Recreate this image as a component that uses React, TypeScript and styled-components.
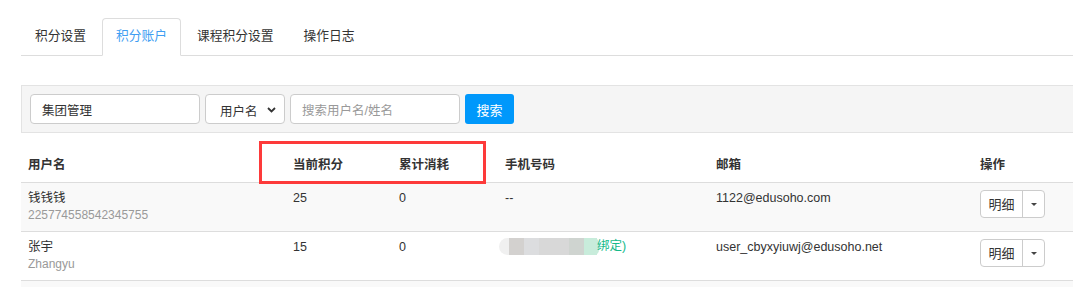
import React from "react";
import styled, { createGlobalStyle } from "styled-components";

const GlobalStyle = createGlobalStyle`
  html, body { margin: 0; padding: 0; background: #fff; overflow: hidden; }
  body {
    font-family: "Liberation Sans", "Noto Sans CJK SC", Arial, sans-serif;
    color: #333;
  }
  * { box-sizing: border-box; }
`;

const Page = styled.div`
  padding: 18px 0 0 21px;
  width: 1090px;
`;

const Tabs = styled.ul`
  display: flex;
  list-style: none;
  margin: 0;
  padding: 0;
  border-bottom: 1px solid #ddd;
`;

const Tab = styled.li<{ $active?: boolean }>`
  margin-right: 2px;
  margin-bottom: -1px;
  padding: 8px 13px 10px;
  font-size: 12.75px;
  line-height: 18px;
  border: 1px solid ${(p) => (p.$active ? "#ddd" : "transparent")};
  border-bottom-color: ${(p) => (p.$active ? "#fff" : "transparent")};
  border-radius: 4px 4px 0 0;
  background: ${(p) => (p.$active ? "#fff" : "transparent")};
  color: ${(p) => (p.$active ? "#3f9ef2" : "#333")};
  white-space: nowrap;
`;

const FilterPanel = styled.div`
  margin-top: 29px;
  display: flex;
  align-items: center;
  gap: 5px;
  padding: 8px;
  background: #f5f5f5;
  border: 1px solid #e3e3e3;
`;

const TextBox = styled.div<{ $placeholder?: boolean }>`
  width: 170px;
  height: 30px;
  display: flex;
  align-items: center;
  padding: 0 11px;
  background: #fff;
  border: 1px solid #ccc;
  border-radius: 4px;
  font-size: 12.5px;
  color: ${(p) => (p.$placeholder ? "#999" : "#333")};
`;

const SelectBox = styled.div`
  width: 80px;
  height: 30px;
  display: flex;
  align-items: center;
  justify-content: space-between;
  padding: 2px 8px 0 14px;
  background: #fff;
  border: 1px solid #ccc;
  border-radius: 4px;
  font-size: 12.5px;
  color: #333;
`;

const SearchButton = styled.button`
  width: 49px;
  height: 30px;
  border: none;
  border-radius: 3px;
  background: #0098fb;
  color: #fff;
  font-family: inherit;
  font-size: 13px;
  padding: 0;
`;

const TableWrap = styled.div`
  position: relative;
  margin-top: 15px;
`;

const Row = styled.div<{ $striped?: boolean; $head?: boolean }>`
  display: grid;
  grid-template-columns: 265px 106px 106px 211px 264px 1fr;
  background: ${(p) => (p.$striped ? "#f9f9f9" : "#fff")};
  border-bottom: 1px solid #ddd;
  font-size: 12.5px;
  font-weight: ${(p) => (p.$head ? 700 : 400)};
  color: #333;
`;

const HeadCell = styled.div`
  padding: 8px 7px;
  line-height: 18px;
`;

const Cell = styled.div`
  padding: 7px 7px;
  line-height: 17px;
  min-height: 48px;
`;

const Sub = styled.div`
  font-size: 12px;
  color: #999;
`;

const Highlight = styled.div`
  position: absolute;
  left: 238px;
  top: -7px;
  width: 227px;
  height: 43px;
  border: 3px solid #fd3a3a;
  pointer-events: none;
`;

const BtnGroup = styled.div`
  display: inline-flex;
  height: 28px;
  border: 1px solid #ccc;
  border-radius: 4px;
  background: #fff;
  overflow: hidden;
`;

const BtnMain = styled.div`
  width: 42px;
  display: flex;
  align-items: center;
  justify-content: center;
  font-size: 13px;
  color: #333;
  border-right: 1px solid #ccc;
`;

const BtnCaret = styled.div`
  width: 21px;
  display: flex;
  align-items: center;
  justify-content: center;
`;

const Caret = styled.span`
  width: 0;
  height: 0;
  border-left: 3px solid transparent;
  border-right: 3px solid transparent;
  border-top: 3px solid #444;
`;

const Phone = styled.div`
  display: flex;
  align-items: center;
  margin-left: -6px;
  margin-top: -1px;
`;

const Bind = styled.span`
  color: #16b98a;
  margin-left: -2px;
  font-size: 12.5px;
`;

const Chevron = () => (
  <svg width="9" height="6" viewBox="0 0 9 6">
    <path d="M1 1 L4.5 4.5 L8 1" fill="none" stroke="#333" strokeWidth="1.8" />
  </svg>
);

const Mosaic = () => (
  <svg width="100" height="17" viewBox="0 0 100 17">
    <rect x="0" y="0" width="20" height="17" rx="8.5" fill="#f0f0f0" />
    <rect x="10" y="0" width="15" height="17" fill="#d3d1cf" />
    <rect x="25" y="0" width="15" height="17" fill="#dcdddf" />
    <rect x="40" y="0" width="30" height="17" fill="#d8d8d8" />
    <rect x="70" y="0" width="15" height="17" fill="#cfd4d0" />
    <rect x="85" y="0" width="13" height="17" fill="#c8ecdb" />
    <rect x="90" y="0" width="10" height="17" rx="5" fill="#c8ecdb" />
  </svg>
);

const OpButton = () => (
  <BtnGroup>
    <BtnMain>明细</BtnMain>
    <BtnCaret>
      <Caret />
    </BtnCaret>
  </BtnGroup>
);

export default function App() {
  return (
    <Page>
      <GlobalStyle />
      <Tabs>
        <Tab>积分设置</Tab>
        <Tab $active>积分账户</Tab>
        <Tab>课程积分设置</Tab>
        <Tab>操作日志</Tab>
      </Tabs>

      <FilterPanel>
        <TextBox>集团管理</TextBox>
        <SelectBox>
          <span>用户名</span>
          <Chevron />
        </SelectBox>
        <TextBox $placeholder>搜索用户名/姓名</TextBox>
        <SearchButton>搜索</SearchButton>
      </FilterPanel>

      <TableWrap>
        <Row $head>
          <HeadCell>用户名</HeadCell>
          <HeadCell>当前积分</HeadCell>
          <HeadCell>累计消耗</HeadCell>
          <HeadCell>手机号码</HeadCell>
          <HeadCell>邮箱</HeadCell>
          <HeadCell>操作</HeadCell>
        </Row>
        <Row $striped>
          <Cell>
            钱钱钱
            <Sub>225774558542345755</Sub>
          </Cell>
          <Cell>25</Cell>
          <Cell>0</Cell>
          <Cell>--</Cell>
          <Cell>1122@edusoho.com</Cell>
          <Cell>
            <OpButton />
          </Cell>
        </Row>
        <Row>
          <Cell>
            张宇
            <Sub>Zhangyu</Sub>
          </Cell>
          <Cell>15</Cell>
          <Cell>0</Cell>
          <Cell>
            <Phone>
              <Mosaic />
              <Bind>绑定)</Bind>
            </Phone>
          </Cell>
          <Cell>user_cbyxyiuwj@edusoho.net</Cell>
          <Cell>
            <OpButton />
          </Cell>
        </Row>
        <Row $striped>
          <Cell />
          <Cell />
          <Cell />
          <Cell />
          <Cell />
          <Cell />
        </Row>
        <Highlight />
      </TableWrap>
    </Page>
  );
}
